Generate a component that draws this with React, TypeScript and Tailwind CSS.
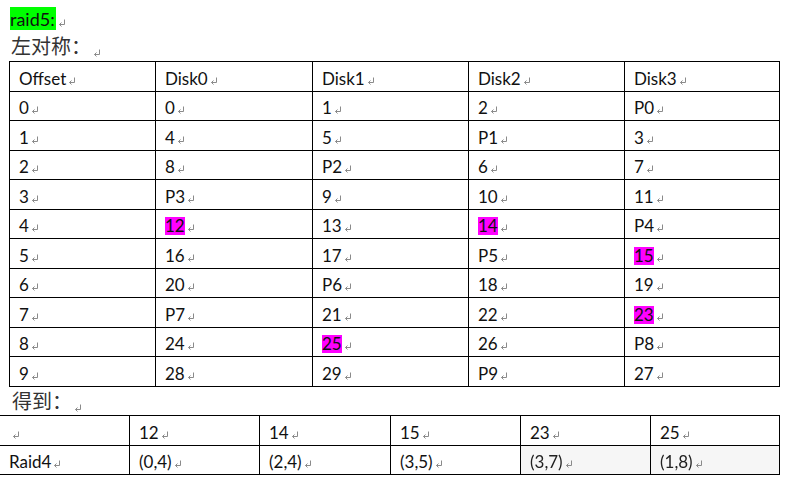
import React from "react";

const Mark = () => (
  <svg width="8" height="8" viewBox="0 0 8 8" className="inline-block ml-[2px] align-baseline">
    <path d="M6.5 0.5 V5.5 H1.5 M3.5 3.5 L1.5 5.5 L3.5 7.5" stroke="#8a8a8a" strokeWidth="1" fill="none" />
  </svg>
);

type Cell = { t: string; hl?: boolean };

const rows1: Cell[][] = [
  [{ t: "Offset" }, { t: "Disk0" }, { t: "Disk1" }, { t: "Disk2" }, { t: "Disk3" }],
  [{ t: "0" }, { t: "0" }, { t: "1" }, { t: "2" }, { t: "P0" }],
  [{ t: "1" }, { t: "4" }, { t: "5" }, { t: "P1" }, { t: "3" }],
  [{ t: "2" }, { t: "8" }, { t: "P2" }, { t: "6" }, { t: "7" }],
  [{ t: "3" }, { t: "P3" }, { t: "9" }, { t: "10" }, { t: "11" }],
  [{ t: "4" }, { t: "12", hl: true }, { t: "13" }, { t: "14", hl: true }, { t: "P4" }],
  [{ t: "5" }, { t: "16" }, { t: "17" }, { t: "P5" }, { t: "15", hl: true }],
  [{ t: "6" }, { t: "20" }, { t: "P6" }, { t: "18" }, { t: "19" }],
  [{ t: "7" }, { t: "P7" }, { t: "21" }, { t: "22" }, { t: "23", hl: true }],
  [{ t: "8" }, { t: "24" }, { t: "25", hl: true }, { t: "26" }, { t: "P8" }],
  [{ t: "9" }, { t: "28" }, { t: "29" }, { t: "P9" }, { t: "27" }],
];

const widths1 = ["w-[146px]", "w-[157px]", "w-[156px]", "w-[156px]", "w-[155px]"];
const widths2 = ["w-[130px]", "w-[130px]", "w-[131px]", "w-[130px]", "w-[130px]", "w-[129px]"];

function CellText({ c }: { c: Cell }) {
  return (
    <span className="whitespace-nowrap">
      {c.hl ? <span className="bg-[#ff00ff] inline-block leading-[18px]">{c.t}</span> : <span>{c.t}</span>}
      <Mark />
    </span>
  );
}

export default function App() {
  return (
    <div
      className="w-[793px] h-[486px] bg-white text-[#111] overflow-hidden pt-[7px]"
      style={{ fontFamily: "Lato, 'Noto Sans', sans-serif" }}
    >
      <div className="h-[23px] pl-[10px] flex items-center">
        <span className="bg-[#00ff00] h-[23px] inline-flex items-center text-[18px] pr-[1px] pt-[1px]">raid5:</span>
        <span className="mt-[4px]"><Mark /></span>
      </div>
      <div
        className="h-[31px] pl-[11px] flex items-center text-[20px] text-[#333]"
        style={{ fontFamily: "'Noto Sans CJK SC', sans-serif" }}
      >
        <span>左对称：</span>
        <span className="mt-[6px]"><Mark /></span>
      </div>

      <div className="ml-[9px] border-l border-t border-black w-[771px] text-[17px]">
        {rows1.map((r, i) => (
          <div key={i} className={`flex ${i % 2 === 0 ? "h-[30px]" : "h-[29px]"}`}>
            {r.map((c, j) => (
              <div
                key={j}
                className={`${widths1[j]} shrink-0 border-r border-b border-black pl-[9px] flex items-center pt-[4px]`}
              >
                <CellText c={c} />
              </div>
            ))}
          </div>
        ))}
      </div>

      <div
        className="h-[28px] pl-[12px] flex items-center text-[20px] text-[#333]"
        style={{ fontFamily: "'Noto Sans CJK SC', sans-serif" }}
      >
        <span>得到：</span>
        <span className="mt-[6px]"><Mark /></span>
      </div>

      <div className="-ml-px border-l border-t border-black w-[781px] text-[17px]">
        <div className="flex h-[30px]">
          {["", "12", "14", "15", "23", "25"].map((t, j) => (
            <div
              key={j}
              className={`${widths2[j]} shrink-0 border-r border-b border-black pl-[9px] flex items-center pt-[4px]`}
            >
              {t === "" ? (
                <span className="pl-[1px]"><Mark /></span>
              ) : (
                <CellText c={{ t }} />
              )}
            </div>
          ))}
        </div>
        <div className="flex h-[29px]">
          {["Raid4", "(0,4)", "(2,4)", "(3,5)", "(3,7)", "(1,8)"].map((t, j) => (
            <div
              key={j}
              className={`${widths2[j]} shrink-0 border-r border-b border-black pl-[9px] flex items-center pt-[4px] ${
                j >= 4 ? "bg-[#f6f6f6]" : ""
              }`}
            >
              <span className={j >= 4 ? "blur-[0.6px] text-[#222]" : ""}>
                <CellText c={{ t }} />
              </span>
            </div>
          ))}
        </div>
      </div>
    </div>
  );
}
